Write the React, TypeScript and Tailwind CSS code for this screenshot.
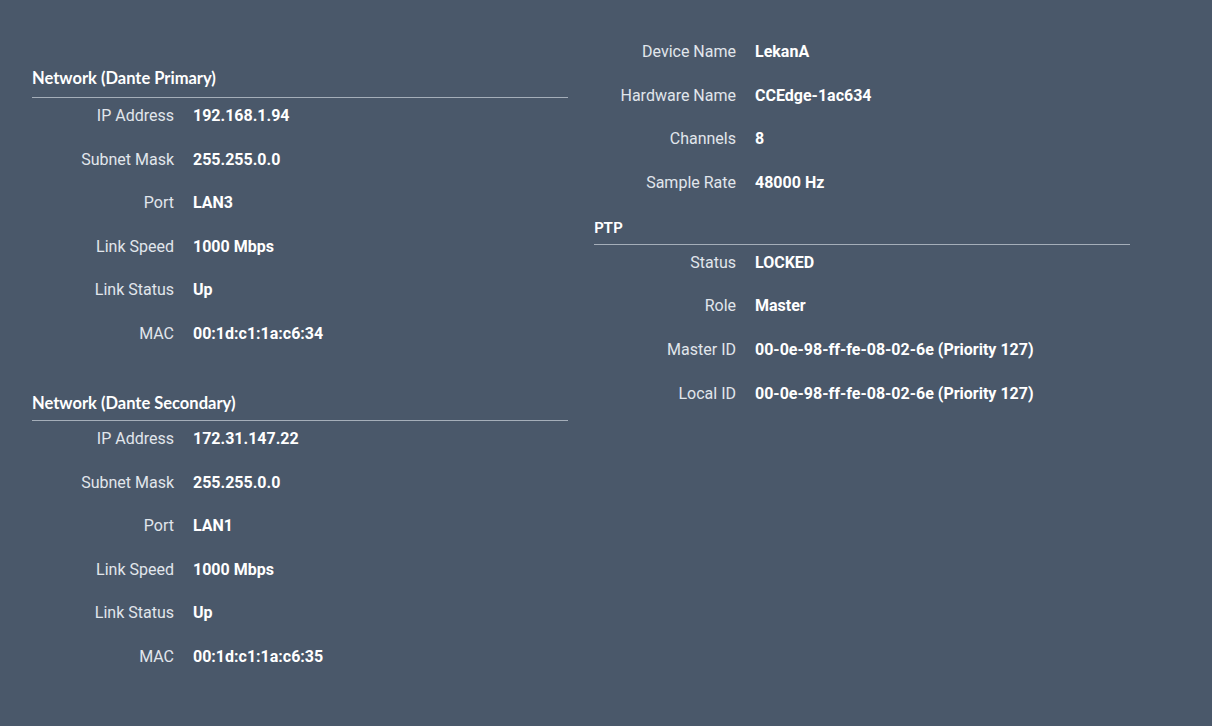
const primary: [string, string][] = [
  ["IP Address", "192.168.1.94"],
  ["Subnet Mask", "255.255.0.0"],
  ["Port", "LAN3"],
  ["Link Speed", "1000 Mbps"],
  ["Link Status", "Up"],
  ["MAC", "00:1d:c1:1a:c6:34"],
];

const secondary: [string, string][] = [
  ["IP Address", "172.31.147.22"],
  ["Subnet Mask", "255.255.0.0"],
  ["Port", "LAN1"],
  ["Link Speed", "1000 Mbps"],
  ["Link Status", "Up"],
  ["MAC", "00:1d:c1:1a:c6:35"],
];

const device: [string, string][] = [
  ["Device Name", "LekanA"],
  ["Hardware Name", "CCEdge-1ac634"],
  ["Channels", "8"],
  ["Sample Rate", "48000 Hz"],
];

const ptp: [string, string][] = [
  ["Status", "LOCKED"],
  ["Role", "Master"],
  ["Master ID", "00-0e-98-ff-fe-08-02-6e (Priority 127)"],
  ["Local ID", "00-0e-98-ff-fe-08-02-6e (Priority 127)"],
];

function Rows({ items }: { items: [string, string][] }) {
  return (
    <div className="flex flex-col gap-[7.6px]">
      {items.map(([label, value]) => (
        <div key={label} className="flex h-9 items-center gap-[19px]">
          <span className="w-[142px] shrink-0 text-right text-base text-[#e1e6ec]">{label}</span>
          <span className="text-base font-bold text-white">{value}</span>
        </div>
      ))}
    </div>
  );
}

function Heading({ title, pb, size }: { title: string; pb: string; size: string }) {
  return (
    <div className={`border-b border-[#a5aeb9] ${pb}`}>
      <h3 className={`${size} font-bold leading-5 text-white font-['Lato',sans-serif]`}>{title}</h3>
    </div>
  );
}

export default function App() {
  return (
    <div className="h-[726px] w-full bg-[#4a586a] font-['Roboto',sans-serif]">
      <div className="flex gap-[26px] px-8">
        <div className="w-[536px] pt-[68px]">
          <Heading title="Network (Dante Primary)" pb="pb-[9px]" size="text-[16.5px]" />
          <Rows items={primary} />
          <div className="mt-[41px]">
            <Heading title="Network (Dante Secondary)" pb="pb-[7px]" size="text-[16.5px]" />
            <Rows items={secondary} />
          </div>
        </div>
        <div className="w-[536px] pt-[34px]">
          <Rows items={device} />
          <div className="mt-4">
            <Heading title="PTP" pb="pb-[7px]" size="text-[15.5px]" />
            <Rows items={ptp} />
          </div>
        </div>
      </div>
    </div>
  );
}
